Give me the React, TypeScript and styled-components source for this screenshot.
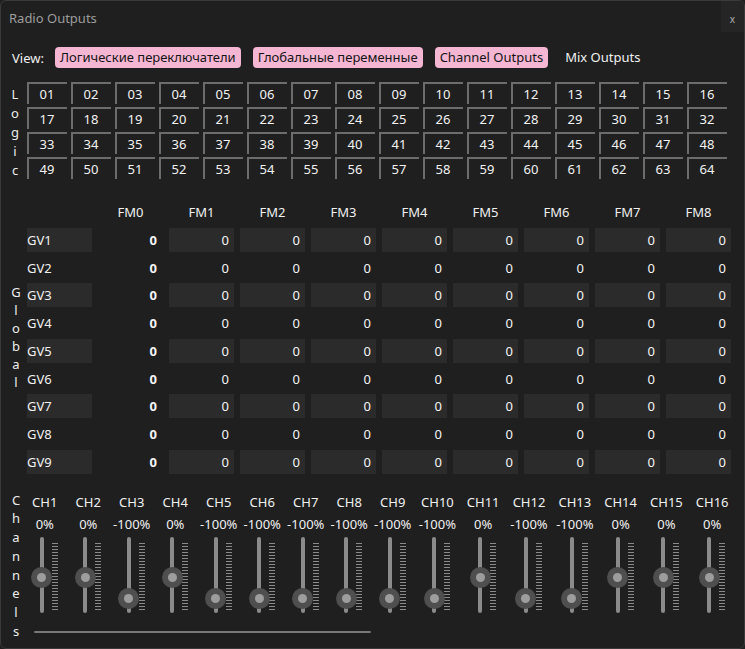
import React from "react";
import styled, { createGlobalStyle } from "styled-components";

const Global = createGlobalStyle`
  html, body { margin: 0; padding: 0; background: #1f1f1f; }
  body { font-family: "Noto Sans", "Open Sans", sans-serif; font-size: 13px; color: #ececec; }
  * { box-sizing: border-box; }
`;

const Window = styled.div`
  width: 745px;
  height: 649px;
  background: #1f1f1f;
  border: 1px solid #3a3a3a;
  border-radius: 6px;
  overflow: hidden;
  display: flex;
  flex-direction: column;
`;

const TitleBar = styled.div`
  height: 36px;
  display: flex;
  align-items: flex-start;
  justify-content: space-between;
`;

const Title = styled.div`
  line-height: 35px;
  padding-left: 8px;
  color: #9c9c9c;
  font-size: 13px;
`;

const CloseBox = styled.div`
  width: 23px;
  height: 31px;
  background: #252525;
  color: #b0b0b0;
  font-size: 10px;
  display: flex;
  justify-content: center;
  padding-top: 12px;
  line-height: 12px;
`;

const ViewBar = styled.div`
  display: flex;
  align-items: center;
  gap: 12px;
  padding-left: 11px;
  margin-top: 10px;
  height: 21px;
`;

const ViewLabel = styled.span`
  color: #f0f0f0;
  margin-right: -1px;
`;

const ViewButton = styled.span<{ $active?: boolean }>`
  height: 21px;
  line-height: 21px;
  padding: 0 5px;
  border-radius: 4px;
  background: ${(p) => (p.$active ? "#f4b6d2" : "transparent")};
  color: ${(p) => (p.$active ? "#141414" : "#f0f0f0")};
  white-space: nowrap;
`;

const Section = styled.div<{ $top: number }>`
  display: flex;
  margin-top: ${(p) => p.$top}px;
`;

const SideLabel = styled.div<{ $width: number; $pad: number; $line: number; $offset: number; $center?: boolean }>`
  width: ${(p) => p.$width}px;
  padding-left: ${(p) => p.$pad}px;
  display: flex;
  flex-direction: column;
  align-items: center;
  justify-content: ${(p) => (p.$center ? "center" : "flex-start")};
  padding-top: ${(p) => p.$offset}px;
  line-height: ${(p) => p.$line}px;
  color: #ececec;
  font-size: 13px;
`;

const LogicGrid = styled.div`
  display: grid;
  grid-template-columns: repeat(16, 40px);
  grid-auto-rows: 22px;
  column-gap: 4px;
  row-gap: 3px;
  margin-left: 0px;
`;

const LogicCell = styled.div`
  border-top: 2px solid #6c6c6c;
  border-left: 2px solid #6c6c6c;
  display: flex;
  align-items: center;
  justify-content: center;
  color: #f2f2f2;
  font-size: 13px;
  padding-right: 2px;
`;

const GlobalGrid = styled.div`
  display: grid;
  grid-template-columns: repeat(10, 65px);
  grid-auto-rows: 24px;
  column-gap: 6px;
  row-gap: 3.75px;
`;

const HeadCell = styled.div`
  display: flex;
  align-items: center;
  justify-content: center;
  color: #f0f0f0;
`;

const GvLabel = styled.div<{ $shade: boolean }>`
  background: ${(p) => (p.$shade ? "#2b2b2b" : "transparent")};
  display: flex;
  align-items: center;
  padding-left: 0px;
  color: #f0f0f0;
`;

const ValueCell = styled.div<{ $shade: boolean; $bold?: boolean }>`
  background: ${(p) => (p.$shade ? "#2b2b2b" : "transparent")};
  display: flex;
  align-items: center;
  justify-content: flex-end;
  padding-right: ${(p) => (p.$bold ? 6 : 5)}px;
  font-weight: ${(p) => (p.$bold ? 700 : 400)};
  color: #f4f4f4;
`;

const ChannelsBody = styled.div`
  display: flex;
  flex-direction: column;
`;

const ChannelRow = styled.div`
  display: flex;
`;

const ChannelCol = styled.div<{ $wide: boolean }>`
  width: ${(p) => (p.$wide ? 45.8 : 43.5)}px;
  display: flex;
  flex-direction: column;
  align-items: center;
`;

const ChText = styled.div`
  line-height: 22px;
  height: 22px;
  color: #f0f0f0;
  white-space: nowrap;
`;

const SliderBox = styled.div`
  margin-top: 2px;
  width: 26px;
  height: 76px;
  display: flex;
  position: relative;
`;

const TrackArea = styled.div`
  width: 20px;
  display: flex;
  justify-content: center;
`;

const Track = styled.div`
  width: 4px;
  height: 76px;
  border-radius: 2px;
  background: #8b8b8b;
`;

const Ticks = styled.div`
  width: 6px;
  margin-top: 6px;
  height: 68px;
  background: repeating-linear-gradient(to bottom, #8a8a8a 0 1px, transparent 1px 3px);
`;

const Thumb = styled.div`
  position: absolute;
  left: -0.5px;
  width: 21px;
  height: 21px;
  border-radius: 50%;
  background: radial-gradient(circle, #4f4f4f 0 60%, #444 100%);
  display: flex;
  align-items: center;
  justify-content: center;
`;

const ThumbDot = styled.div`
  width: 9px;
  height: 9px;
  border-radius: 50%;
  background: #9d9d9d;
`;

const ScrollLine = styled.div`
  margin-top: 18px;
  margin-left: 11px;
  width: 337px;
  height: 2px;
  border-radius: 1px;
  background: #777;
`;

const logicNums = Array.from({ length: 64 }, (_, i) => String(i + 1).padStart(2, "0"));
const channelValues = [0, 0, -100, 0, -100, -100, -100, -100, -100, -100, 0, -100, -100, 0, 0, 0];

function Letters({ text }: { text: string }) {
  return (
    <>
      {text.split("").map((c, i) => (
        <span key={i}>{c}</span>
      ))}
    </>
  );
}

export default function App() {
  return (
    <>
      <Global />
      <Window>
        <TitleBar>
          <Title>Radio Outputs</Title>
          <CloseBox>x</CloseBox>
        </TitleBar>
        <ViewBar>
          <ViewLabel>View:</ViewLabel>
          <ViewButton $active>Логические переключатели</ViewButton>
          <ViewButton $active>Глобальные переменные</ViewButton>
          <ViewButton $active>Channel Outputs</ViewButton>
          <ViewButton>Mix Outputs</ViewButton>
        </ViewBar>

        <Section $top={14}>
          <SideLabel $width={26} $pad={2} $line={19} $offset={3}>
            <Letters text="Logic" />
          </SideLabel>
          <LogicGrid>
            {logicNums.map((n) => (
              <LogicCell key={n}>{n}</LogicCell>
            ))}
          </LogicGrid>
        </Section>

        <Section $top={20}>
          <SideLabel $width={26} $pad={4} $line={18} $offset={0} $center>
            <Letters text="Global" />
          </SideLabel>
          <GlobalGrid>
            <div />
            {Array.from({ length: 9 }, (_, i) => (
              <HeadCell key={i}>FM{i}</HeadCell>
            ))}
            {Array.from({ length: 9 }, (_, r) => {
              const shade = r % 2 === 0;
              return (
                <React.Fragment key={r}>
                  <GvLabel $shade={shade}>GV{r + 1}</GvLabel>
                  <ValueCell $shade={false} $bold>
                    0
                  </ValueCell>
                  {Array.from({ length: 8 }, (_, c) => (
                    <ValueCell key={c} $shade={shade}>
                      0
                    </ValueCell>
                  ))}
                </React.Fragment>
              );
            })}
          </GlobalGrid>
        </Section>

        <Section $top={17}>
          <SideLabel $width={22} $pad={8} $line={18.7} $offset={0}>
            <Letters text="Channels" />
          </SideLabel>
          <ChannelsBody>
            <ChannelRow>
              {channelValues.map((v, i) => (
                <ChannelCol key={i} $wide={i >= 9}>
                  <ChText>CH{i + 1}</ChText>
                  <ChText>{v}%</ChText>
                  <SliderBox>
                    <TrackArea>
                      <Track />
                    </TrackArea>
                    <Ticks />
                    <Thumb style={{ top: 41 - 10.5 - v * 0.21 }}>
                      <ThumbDot />
                    </Thumb>
                  </SliderBox>
                </ChannelCol>
              ))}
            </ChannelRow>
            <ScrollLine />
          </ChannelsBody>
        </Section>
      </Window>
    </>
  );
}
